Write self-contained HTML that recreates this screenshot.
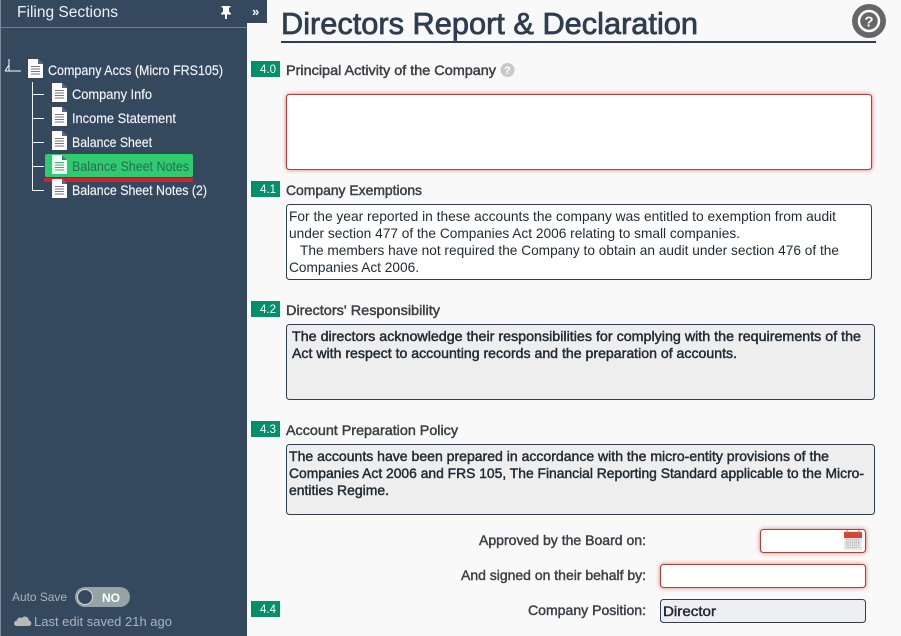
<!DOCTYPE html>
<html lang="en"><head><meta charset="utf-8"><title>Directors Report &amp; Declaration</title>
<style>
html,body{margin:0;padding:0;width:901px;height:636px;overflow:hidden;background:#f9f9f9}
svg{display:block}
text{font-family:"Liberation Sans",sans-serif;white-space:pre}
.n{font-size:14px;fill:#f2f5f7;stroke:#f2f5f7;stroke-width:.15px}
.h{font-size:14px;fill:#3a3f44;stroke:#3a3f44;stroke-width:.45px}
.b{font-size:14px;fill:#1f2a33}
.s{font-size:14px;fill:#1f2a33;stroke:#1f2a33;stroke-width:.45px}
.l{font-size:14px;fill:#3c4248;stroke:#3c4248;stroke-width:.45px}
.t{font-size:11.5px;fill:#fff}
.box{stroke:#2c3e50;stroke-width:1}
.err{fill:#fff;stroke:#a8443c;stroke-width:1.1;filter:url(#g)}
</style></head><body>
<svg width="901" height="636" viewBox="0 0 901 636" xmlns="http://www.w3.org/2000/svg">
<defs>
<filter id="g" x="-10%" y="-40%" width="120%" height="180%"><feDropShadow dx="0" dy="0" stdDeviation="2.2" flood-color="#dd3a30" flood-opacity=".7"/></filter>
<g id="doc">
<path d="M0 0H10L15 5V19H0Z" fill="#fbfbfd"/>
<path d="M10 0L15 5H10Z" fill="#56648f"/>
<path d="M3 7.500H12M3 10H12M3 12.500H12M3 15H12" stroke="#7a7a7a" stroke-width="1"/>
</g>
<g id="docg">
<path d="M0 0H10L15 5V19H0Z" fill="#f4faf6"/>
<path d="M10 0L15 5H10Z" fill="#56648f"/>
<path d="M3 7.500H12M3 10H12M3 12.500H12M3 15H12" stroke="#3fae78" stroke-width="1"/>
</g>
</defs>
<rect width="901" height="636" fill="#f9f9f9"/>
<rect width="247" height="636" fill="#34495e"/>
<rect width="1" height="636" fill="#7d8b99"/>
<rect x="247" width="20" height="23" fill="#34495e"/>
<rect y="27" width="247" height="1" fill="#1fa898"/>
<text x="17" y="17" font-size="15.5" fill="#eef1f3" textLength="101" lengthAdjust="spacingAndGlyphs">Filing Sections</text>
<path d="M221.500 6H230.500V7.500H229V11.500L231 13.500V14.500H227V19H225V14.500H221V13.500L223 11.500V7.500H221.500Z" fill="#fff"/>
<text x="252" y="16" font-size="13" font-weight="bold" fill="#fff">»</text>

<path d="M9 59V71M5 71H21M9 65L5 71" stroke="#fff" stroke-width="1" fill="none"/>
<path d="M32.500 82V190.500H44M32.500 94.500H44M32.500 118.500H44M32.500 142.500H44M32.500 166.500H44" stroke="#f2f5f7" stroke-width="1" fill="none"/>

<rect x="45" y="154" width="148" height="23" rx="2" fill="#2ecc71"/>
<rect x="44" y="178" width="149" height="4" rx="1" fill="#d91f2a"/>

<use href="#doc" x="28" y="59"/>
<use href="#doc" x="52" y="83"/>
<use href="#doc" x="52" y="107"/>
<use href="#doc" x="52" y="131"/>
<use href="#docg" x="52" y="155"/>
<use href="#doc" x="52" y="179"/>
<text class="n" x="48" y="75" textLength="175" lengthAdjust="spacingAndGlyphs">Company Accs (Micro FRS105)</text>
<text class="n" x="72" y="99" textLength="80" lengthAdjust="spacingAndGlyphs">Company Info</text>
<text class="n" x="72" y="123" textLength="104" lengthAdjust="spacingAndGlyphs">Income Statement</text>
<text class="n" x="72" y="147" textLength="80" lengthAdjust="spacingAndGlyphs">Balance Sheet</text>
<text x="72" y="171" font-size="14" fill="#2a6b4c" textLength="117" lengthAdjust="spacingAndGlyphs">Balance Sheet Notes</text>
<text class="n" x="72" y="195" textLength="135" lengthAdjust="spacingAndGlyphs">Balance Sheet Notes (2)</text>

<text x="12" y="601" font-size="12" fill="#aab4bd" textLength="55" lengthAdjust="spacingAndGlyphs">Auto Save</text>
<rect x="75" y="587" width="55" height="20" rx="10" fill="#95a3a6"/>
<circle cx="85" cy="597" r="7.500" fill="#34495e" stroke="#d5dadd" stroke-width="1"/>
<text x="102" y="602" font-size="12" font-weight="bold" fill="#fff">NO</text>
<path d="M17 626H29C32 626 32 621 29 620.500C29 617 24 615 22 618C19 616.500 17 618.500 17 620.500C13 621 13 626 17 626Z" fill="#b5b9bc"/>
<text x="34" y="626" font-size="12.500" fill="#aab4bd" textLength="138" lengthAdjust="spacingAndGlyphs">Last edit saved 21h ago</text>

<text x="281" y="34" font-size="31" fill="#2c3e50" stroke="#2c3e50" stroke-width=".8" textLength="417" lengthAdjust="spacingAndGlyphs">Directors Report &amp; Declaration</text>
<rect x="281" y="41" width="595" height="2" fill="#2c3e50"/>
<circle cx="869" cy="21" r="17" fill="#666"/>
<circle cx="869" cy="21" r="10" fill="none" stroke="#fff" stroke-width="2.500"/>
<text x="869" y="26.500" font-size="15" font-weight="bold" fill="#fff" text-anchor="middle">?</text>

<rect x="251" y="61" width="29" height="16" fill="#00906a"/>
<text class="t" x="260" y="73">4.0</text>
<rect x="251" y="181" width="29" height="16" fill="#00906a"/>
<text class="t" x="260" y="193">4.1</text>
<rect x="251" y="301" width="29" height="16" fill="#00906a"/>
<text class="t" x="260" y="313">4.2</text>
<rect x="251" y="421" width="29" height="16" fill="#00906a"/>
<text class="t" x="260" y="433">4.3</text>
<rect x="251" y="601" width="29" height="16" fill="#00906a"/>
<text class="t" x="260" y="613">4.4</text>

<text class="h" x="286" y="75" textLength="210" lengthAdjust="spacingAndGlyphs">Principal Activity of the Company</text>
<circle cx="507.500" cy="70" r="7" fill="#c9c9c9"/>
<text x="507.500" y="74" font-size="11" font-weight="bold" fill="#fff" text-anchor="middle">?</text>
<rect class="err" x="286.500" y="94.500" width="585" height="75" rx="3"/>

<text class="h" x="286" y="195" textLength="136" lengthAdjust="spacingAndGlyphs">Company Exemptions</text>
<rect class="box" x="286.500" y="204.500" width="585" height="75" rx="3" fill="#fff"/>
<text class="b" x="289" y="221" textLength="547" lengthAdjust="spacingAndGlyphs">For the year reported in these accounts the company was entitled to exemption from audit</text>
<text class="b" x="289" y="238" textLength="451" lengthAdjust="spacingAndGlyphs">under section 477 of the Companies Act 2006 relating to small companies.</text>
<text class="b" x="300" y="255" textLength="539" lengthAdjust="spacingAndGlyphs">The members have not required the Company to obtain an audit under section 476 of the</text>
<text class="b" x="289" y="272" textLength="130" lengthAdjust="spacingAndGlyphs">Companies Act 2006.</text>

<text class="h" x="286" y="315" textLength="154" lengthAdjust="spacingAndGlyphs">Directors' Responsibility</text>
<rect class="box" x="286.500" y="324.500" width="588" height="75" rx="3" fill="#eeeeee"/>
<text class="s" x="292" y="341" textLength="569" lengthAdjust="spacingAndGlyphs">The directors acknowledge their responsibilities for complying with the requirements of the</text>
<text class="s" x="292" y="358" textLength="445" lengthAdjust="spacingAndGlyphs">Act with respect to accounting records and the preparation of accounts.</text>

<text class="h" x="286" y="435" textLength="172" lengthAdjust="spacingAndGlyphs">Account Preparation Policy</text>
<rect class="box" x="286.500" y="444.500" width="588" height="70" rx="3" fill="#eeeeee"/>
<text class="s" x="289" y="461" textLength="540" lengthAdjust="spacingAndGlyphs">The accounts have been prepared in accordance with the micro-entity provisions of the</text>
<text class="s" x="289" y="478" textLength="575" lengthAdjust="spacingAndGlyphs">Companies Act 2006 and FRS 105, The Financial Reporting Standard applicable to the Micro-</text>
<text class="s" x="289" y="495" textLength="100" lengthAdjust="spacingAndGlyphs">entities Regime.</text>

<text class="l" x="646" y="545" text-anchor="end" textLength="167" lengthAdjust="spacingAndGlyphs">Approved by the Board on:</text>
<rect class="err" x="760.500" y="529.500" width="105" height="23" rx="3"/>
<rect x="844" y="531" width="18" height="19" fill="#e8e8e8"/>
<rect x="844" y="532" width="18" height="6" fill="#d9442f"/>
<path d="M847 530V534M859 530V534" stroke="#8a8a8a" stroke-width="1"/>
<path d="M846 540H860M846 542.500H860M846 545H860M846 547.500H860M847 539V549M850 539V549M853 539V549M856 539V549M859 539V549" stroke="#a9a9a9" stroke-width=".8" stroke-dasharray="1 1"/>

<text class="l" x="646" y="580" text-anchor="end" textLength="185" lengthAdjust="spacingAndGlyphs">And signed on their behalf by:</text>
<rect class="err" x="660.500" y="564.500" width="205" height="23" rx="3"/>

<text class="l" x="646" y="615" text-anchor="end" textLength="118" lengthAdjust="spacingAndGlyphs">Company Position:</text>
<rect class="box" x="660.500" y="599.500" width="205" height="23" rx="3" fill="#eeeff1"/>
<text class="s" x="663" y="616" textLength="53" lengthAdjust="spacingAndGlyphs">Director</text>
</svg>
</body></html>
